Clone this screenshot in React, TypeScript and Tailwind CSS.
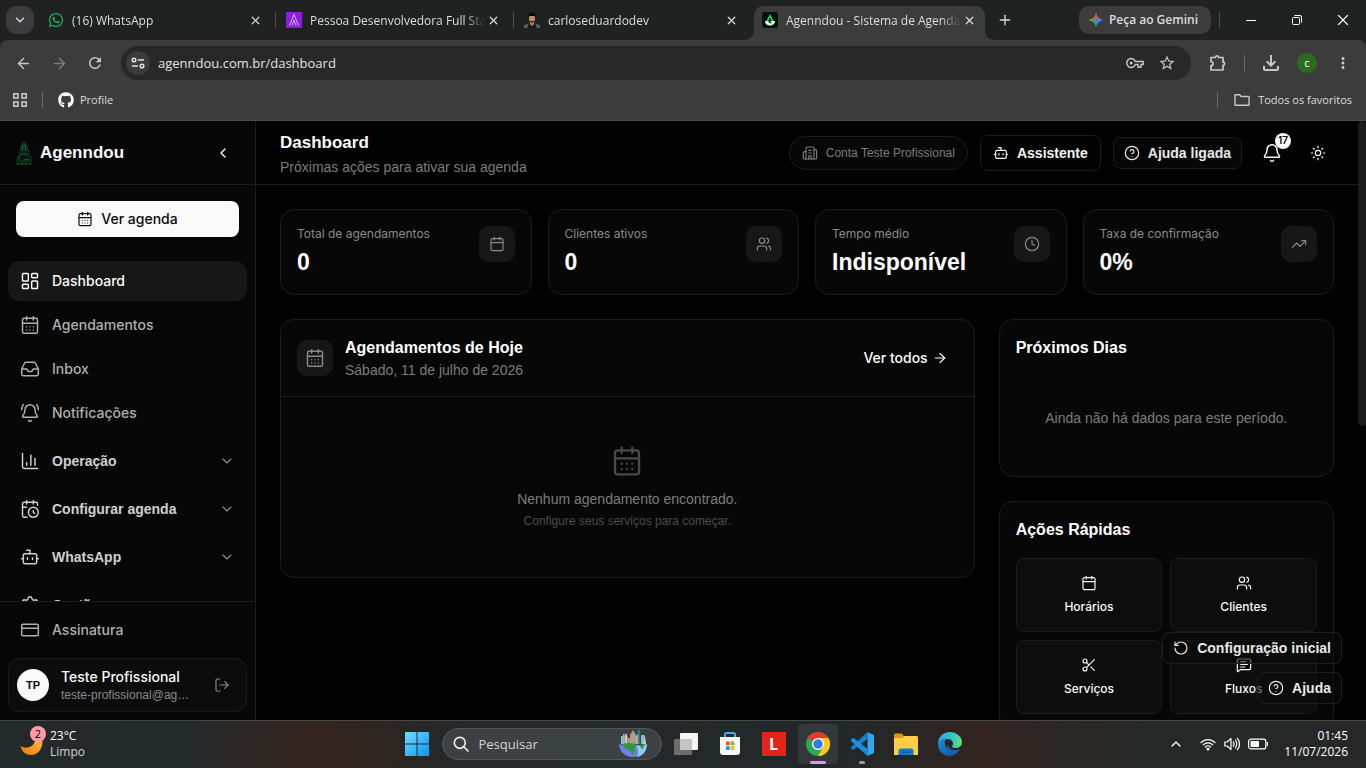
import type { ReactNode } from "react";
import {
  ArrowLeft,
  ArrowRight,
  Bell,
  BellRing,
  Bot,
  Building2,
  Calendar,
  CalendarClock,
  CalendarDays,
  ChartColumn,
  ChevronDown,
  ChevronLeft,
  ChevronUp,
  CircleHelp,
  Clock,
  CreditCard,
  Inbox,
  LayoutDashboard,
  LogOut,
  MessageSquareText,
  Plus,
  RotateCcw,
  Scissors,
  Settings,
  Sun,
  TrendingUp,
  Users,
  X,
  type LucideIcon,
} from "lucide-react";
import { FaGithub, FaWhatsapp } from "react-icons/fa";
import {
  MdMoreVert,
  MdOutlineFileDownload,
  MdRefresh,
  MdStarBorder,
} from "react-icons/md";

/* ---------- Browser ---------- */

function PurpleFavicon() {
  return (
    <svg viewBox="0 0 16 16" className="size-4 shrink-0">
      <rect width="16" height="16" fill="#8a1fe0" />
      <path d="M3.500 13.500 8 2.500 12.500 13.500" fill="none" stroke="#d9b0ff" strokeWidth="1" />
      <path d="M6 13.500 8 8 10 13.500" fill="none" stroke="#e8ccff" strokeWidth="0.800" />
    </svg>
  );
}

function PortraitFavicon() {
  return (
    <svg viewBox="0 0 16 16" className="size-4 shrink-0">
      <path d="M0 16v-2.500c1-1 3-1.500 5-2h6c2 .5 4 1 5 2V16z" fill="#5d5f62" />
      <path d="M3.500 16l1-4.500h7l1 4.500z" fill="#1c1a1a" />
      <path d="M6 9h4v3.500l-2 1.500-2-1.500z" fill="#a9745a" />
      <ellipse cx="8" cy="6.500" rx="3" ry="4.300" fill="#c08a6c" />
      <path d="M4.600 6C4 1.500 6 .3 8 .3s4.200 1 3.400 5.700L10.800 4H5.300z" fill="#0d0b0b" />
      <path d="M5.300 8.200c.4 3 5 3 5.400 0l-1 .8H6.300z" fill="#33211b" />
    </svg>
  );
}

function AgenndouFavicon() {
  return (
    <svg viewBox="0 0 16 16" className="size-4 shrink-0">
      <rect width="16" height="16" rx="3" fill="#04140c" />
      <path d="M8 2 4.300 9h2L8 5.500l1.700 3.500h2z" fill="#1fd15f" />
      <path d="M3 9c0 6 10 6 10 0H8.500v1.600h1.700c-.8 1.200-3.600 1-3.800-1.600z" fill="#dfffe9" />
    </svg>
  );
}

function GeminiStar() {
  return (
    <svg viewBox="0 0 16 16" className="size-4 shrink-0">
      <defs>
        <linearGradient id="gm" x1="0" y1="0.500" x2="1" y2="0.500">
          <stop offset="0" stopColor="#fbbc04" />
          <stop offset="0.350" stopColor="#34a853" />
          <stop offset="0.550" stopColor="#4285f4" />
          <stop offset="1" stopColor="#4c8df6" />
        </linearGradient>
        <linearGradient id="gmTop" x1="0" y1="0" x2="0" y2="1">
          <stop offset="0" stopColor="#ea4335" />
          <stop offset="0.250" stopColor="#ea4335" />
          <stop offset="0.500" stopColor="#ea4335" stopOpacity="0" />
        </linearGradient>
      </defs>
      <path d="M8 0.500C9 5 11 7 15.500 8 11 9 9 11 8 15.500 7 11 5 9 .5 8 5 7 7 5 8 .5z" fill="url(#gm)" />
      <path d="M8 0.500C9 5 11 7 15.500 8 11 9 9 11 8 15.500 7 11 5 9 .5 8 5 7 7 5 8 .5z" fill="url(#gmTop)" />
    </svg>
  );
}

type TabProps = { icon: ReactNode; title: string; active?: boolean; separator?: boolean };

function BrowserTab({ icon, title, active, separator }: TabProps) {
  return (
    <div className="relative flex h-10 w-[238px] shrink-0 items-center">
      {active && (
        <svg viewBox="0 0 251 34" className="absolute -left-2 bottom-0 h-[34px] w-[251px]">
          <path d="M0 34c6 0 10-4 10-10V10C10 4 14 0 20 0h211c6 0 10 4 10 10v14c0 6 4 10 10 10z" fill="#3c3c3c" />
        </svg>
      )}
      <button
        type="button"
        className="relative flex h-7 min-w-0 flex-1 items-center gap-2 pl-[10px] text-left text-[12px] text-[#dddddd]"
      >
        {icon}
        <span className="flex-1 overflow-hidden whitespace-nowrap pt-px [mask-image:linear-gradient(90deg,#000_88%,transparent)]">
          {title}
        </span>
      </button>
      <button type="button" aria-label="Fechar guia" className="relative mr-3 flex size-4 items-center justify-center text-[#dddddd]">
        <X size={13} strokeWidth={2.200} />
      </button>
      <span className={separator ? "h-4 w-px bg-[#505252]" : "w-px"} />
    </div>
  );
}

function Browser() {
  return (
    <header className="shrink-0 bg-[#202221] font-['Open_Sans','Noto_Sans',sans-serif] text-[#dddddd]">
      <div className="flex h-10 items-center">
        <button type="button" aria-label="Pesquisar guias" className="ml-[6px] mr-1 flex size-7 items-center justify-center rounded-[10px] bg-[#3c3c3c]">
          <ChevronDown size={14} strokeWidth={2.500} className="text-[#c7d7f5]" />
        </button>
        <BrowserTab icon={<FaWhatsapp className="size-4 shrink-0 text-[#25b462]" />} title="(16) WhatsApp" separator />
        <BrowserTab icon={<PurpleFavicon />} title="Pessoa Desenvolvedora Full Stack" separator />
        <BrowserTab icon={<PortraitFavicon />} title="carloseduardodev" />
        <BrowserTab icon={<AgenndouFavicon />} title="Agenndou - Sistema de Agendamentos" active />
        <button type="button" aria-label="Nova guia" className="ml-px flex size-7 items-center justify-center">
          <Plus size={16} />
        </button>
        <button type="button" className="ml-auto flex h-7 items-center gap-[5px] whitespace-nowrap rounded-[10px] bg-[#3c3c3c] pl-[9px] pr-[13px] text-[12px] font-semibold">
          <GeminiStar />
          Peça ao Gemini
        </button>
        <span className="mx-2 h-4 w-px bg-[#505252]" />
        <button type="button" aria-label="Minimizar" className="flex h-10 w-[46px] items-center justify-center">
          <span className="h-px w-[10px] bg-white" />
        </button>
        <button type="button" aria-label="Restaurar" className="flex h-10 w-[46px] items-center justify-center">
          <svg viewBox="0 0 10 10" className="size-[10px]" fill="none" stroke="#fff">
            <rect x="0.500" y="2.500" width="7" height="7" rx="1" />
            <path d="M2.500 .5H8A1.500 1.500 0 0 1 9.500 2v5.500" />
          </svg>
        </button>
        <button type="button" aria-label="Fechar" className="flex h-10 w-[46px] items-center justify-center text-white">
          <X size={18} strokeWidth={1.500} />
        </button>
      </div>

      <div className="rounded-t-lg border-b border-[#4a4a4a] bg-[#3c3c3c]">
        <div className="flex h-10 items-end">
          <div className="flex h-[34px] w-[121px] items-center gap-4 pl-[13px]">
            <button type="button" aria-label="Voltar" className="flex size-5 items-center justify-center text-[#c7c7c7]"><ArrowLeft size={17} /></button>
            <button type="button" aria-label="Avançar" className="flex size-5 items-center justify-center text-[#7d7d7d]"><ArrowRight size={17} /></button>
            <button type="button" aria-label="Recarregar" className="flex size-5 items-center justify-center text-[#c7c7c7]"><MdRefresh size={18} /></button>
          </div>
          <div className="flex h-[34px] flex-1 items-center rounded-full bg-[#282828] pl-[5px] pr-[15px]">
            <button type="button" aria-label="Informações do site" className="flex size-6 items-center justify-center rounded-full bg-[#3c3c3c]">
              <svg viewBox="0 0 14 14" className="size-[14px]" fill="none" stroke="#e3e3e3" strokeWidth="1.500">
                <circle cx="3" cy="4" r="1.800" />
                <path d="M7 4h6M1 10h6" />
                <circle cx="11" cy="10" r="1.800" />
              </svg>
            </button>
            <input
              aria-label="Barra de endereço"
              defaultValue="agenndou.com.br/dashboard"
              className="ml-2 min-w-0 flex-1 bg-transparent pt-px text-[13px] text-[#e3e3e3] outline-none"
            />
            <button type="button" aria-label="Senhas" className="mr-[14px] text-[#c7c7c7]">
              <svg viewBox="0 0 18 12" className="h-3 w-[18px]" fill="none" stroke="currentColor" strokeWidth="1.500">
                <path d="M9.300 4.500A4.400 4.400 0 1 0 9.300 7.500H12v2.700h3V7.500h2.200v-3z" strokeLinejoin="round" />
                <circle cx="5.200" cy="6" r="1.500" fill="currentColor" stroke="none" />
              </svg>
            </button>
            <button type="button" aria-label="Favoritar" className="text-[#c7c7c7]"><MdStarBorder size={18} /></button>
          </div>
          <div className="flex h-[34px] w-[175px] items-center pl-[17px] text-[#c7c7c7]">
            <button type="button" aria-label="Extensões" className="flex size-5 items-center justify-center">
              <svg viewBox="0 0 18 18" className="size-[18px]" fill="none" stroke="currentColor" strokeWidth="1.700">
                <path d="M2 3.500h4.300a1.600 1.600 0 0 1 3.200 0H14v4.600a1.600 1.600 0 0 1 0 3.200V16H2v-4.300a2 2 0 0 0 0-4z" strokeLinejoin="round" />
              </svg>
            </button>
            <span className="ml-4 h-4 w-px bg-[#6a6a6a]" />
            <button type="button" aria-label="Downloads" className="ml-4 flex size-5 items-center justify-center"><MdOutlineFileDownload size={24} className="shrink-0" /></button>
            <button type="button" aria-label="Perfil" className="ml-4 flex size-5 items-center justify-center rounded-full bg-[#2f6b1f] text-[11px] text-white">c</button>
            <button type="button" aria-label="Menu" className="ml-4 flex size-5 items-center justify-center"><MdMoreVert size={18} /></button>
          </div>
        </div>
        <div className="flex h-10 items-center text-[11px]">
          <button type="button" aria-label="Grupos de guias" className="ml-3 flex size-4 items-center justify-center">
            <svg viewBox="0 0 14 14" className="size-[14px]" fill="none" stroke="#c7c7c7" strokeWidth="1.600">
              <rect x="0.800" y="0.800" width="4.200" height="4.200" />
              <rect x="9" y="0.800" width="4.200" height="4.200" />
              <rect x="0.800" y="9" width="4.200" height="4.200" />
              <rect x="9" y="9" width="4.200" height="4.200" />
            </svg>
          </button>
          <span className="ml-[14px] h-4 w-px bg-[#6a6a6a]" />
          <a href="#profile" className="ml-[15px] flex items-center gap-[6px]">
            <FaGithub size={16} className="text-white" />
            Profile
          </a>
          <span className="ml-auto h-4 w-px bg-[#6a6a6a]" />
          <button type="button" className="ml-4 mr-[14px] flex items-center gap-2 whitespace-nowrap">
            <svg viewBox="0 0 16 14" className="h-[14px] w-4" fill="none" stroke="#c7c7c7" strokeWidth="1.400" strokeLinejoin="round">
              <path d="M1 12.300V1.700h4.600l1.600 1.800H15v8.800z" />
            </svg>
            Todos os favoritos
          </button>
        </div>
      </div>
    </header>
  );
}

/* ---------- Sidebar ---------- */

function AgenndouLogo() {
  return (
    <svg viewBox="0 0 16 24" className="h-6 w-4" fill="none" stroke="#123d23" strokeWidth="1">
      <path d="M4 10C5 5 6 1 8 .8 10 1 11 5 12.500 10" fill="#0a2013" />
      <path d="M6.500 9V5.500a1.500 1.500 0 0 1 3 0V9" stroke="#1f7a41" />
      <path d="M3 12c3-3.500 8-3.500 11 0M1 17c1-6 13-7 14-1v7H1z" fill="#08170e" />
      <path d="M12 14.500c-4-3-9-1-9 2.500s7 5 10 1.500H8" stroke="#175530" />
      <path d="M1 23h14" stroke="#0f6a32" strokeDasharray="2 2" />
    </svg>
  );
}

const links: { icon: LucideIcon; label: string }[] = [
  { icon: LayoutDashboard, label: "Dashboard" },
  { icon: CalendarDays, label: "Agendamentos" },
  { icon: Inbox, label: "Inbox" },
  { icon: BellRing, label: "Notificações" },
];

const groups: { icon: LucideIcon; label: string }[] = [
  { icon: ChartColumn, label: "Operação" },
  { icon: CalendarClock, label: "Configurar agenda" },
  { icon: Bot, label: "WhatsApp" },
  { icon: Settings, label: "Gestão" },
];

function Sidebar() {
  return (
    <aside className="flex w-64 shrink-0 flex-col border-r border-[#1c1c1c] bg-[#070707]">
      <div className="flex h-16 shrink-0 items-center border-b border-[#1c1c1c] px-4">
        <AgenndouLogo />
        <span className="ml-2 text-[17px] font-semibold text-[#fafafa]">Agenndou</span>
        <button type="button" aria-label="Recolher menu" className="ml-auto flex size-8 items-center justify-center text-[#fafafa]">
          <ChevronLeft size={16} />
        </button>
      </div>
      <div className="flex min-h-0 flex-1 flex-col overflow-hidden">
        <div className="p-4">
          <button type="button" className="flex h-9 w-full items-center justify-center gap-2 rounded-lg bg-[#fafafa] font-[Inter,sans-serif] text-sm font-medium text-[#0a0a0a]">
            <CalendarDays size={16} strokeWidth={1.750} />
            Ver agenda
          </button>
        </div>
        <nav className="flex flex-col gap-1 p-2">
          {links.map(({ icon: Icon, label }, i) => (
            <a
              key={label}
              href={"#" + label.toLowerCase()}
              className={
                "flex h-10 shrink-0 items-center gap-3 rounded-xl px-3 font-[Inter,sans-serif] text-sm font-medium " +
                (i === 0 ? "bg-[#171717] text-[#fafafa]" : "text-[#b0b0b0]")
              }
            >
              <Icon size={20} strokeWidth={1.750} />
              {label}
            </a>
          ))}
          <div className="flex flex-col gap-2 pt-1">
            {groups.map(({ icon: Icon, label }) => (
              <button
                key={label}
                type="button"
                className="flex h-10 shrink-0 items-center gap-3 rounded-xl px-3 text-left text-sm font-semibold text-[#d0d0d0]"
              >
                <Icon size={20} strokeWidth={1.750} />
                <span className="flex-1">{label}</span>
                <ChevronDown size={16} strokeWidth={1.750} className="text-[#8a8a8a]" />
              </button>
            ))}
          </div>
        </nav>
      </div>
      <div className="flex shrink-0 flex-col gap-2 border-t border-[#1c1c1c] p-2">
        <a href="#assinatura" className="flex h-10 items-center gap-3 px-3 font-[Inter,sans-serif] text-sm font-medium text-[#b0b0b0]">
          <CreditCard size={20} strokeWidth={1.750} />
          Assinatura
        </a>
        <div className="flex items-center gap-3 rounded-xl border border-[#1c1c1c] bg-[#0c0c0c] p-2">
          <span className="flex size-8 shrink-0 items-center justify-center rounded-full bg-[#fafafa] text-[11px] font-semibold text-[#0a0a0a]">TP</span>
          <div className="min-w-0 flex-1">
            <div className="truncate font-[Inter,sans-serif] text-sm leading-5 font-medium text-[#fafafa]">Teste Profissional</div>
            <div className="truncate text-xs text-[#8a8a8a]">teste-profissional@agenndou.com.br</div>
          </div>
          <button type="button" aria-label="Sair" className="flex size-8 shrink-0 items-center justify-center text-[#8a8a8a]">
            <LogOut size={16} strokeWidth={1.750} />
          </button>
        </div>
      </div>
    </aside>
  );
}

/* ---------- Dashboard ---------- */

const stats: { label: string; value: string; icon: LucideIcon }[] = [
  { label: "Total de agendamentos", value: "0", icon: Calendar },
  { label: "Clientes ativos", value: "0", icon: Users },
  { label: "Tempo médio", value: "Indisponível", icon: Clock },
  { label: "Taxa de confirmação", value: "0%", icon: TrendingUp },
];

const actions: { label: string; icon: LucideIcon }[] = [
  { label: "Horários", icon: Calendar },
  { label: "Clientes", icon: Users },
  { label: "Serviços", icon: Scissors },
  { label: "Fluxos", icon: MessageSquareText },
];

const card = "rounded-[14px] border border-[#1c1c1c] bg-[#070707]";

function TopBar() {
  return (
    <div className="flex h-16 shrink-0 items-center gap-3 border-b border-[#1c1c1c] px-6">
      <div className="mr-auto pt-1">
        <h1 className="text-[17px] leading-6 font-semibold text-[#fafafa]">Dashboard</h1>
        <p className="text-sm leading-6 text-[#7c7c7c]">Próximas ações para ativar sua agenda</p>
      </div>
      <div className="flex h-[34px] items-center gap-2 whitespace-nowrap rounded-full border border-[#1c1c1c] bg-[#070707] px-3 text-xs text-[#7c7c7c]">
        <Building2 size={16} strokeWidth={1.750} />
        Conta Teste Profissional
      </div>
      <button type="button" className="flex h-9 items-center gap-2 rounded-lg border border-[#1c1c1c] px-3 text-sm font-semibold text-[#f5f5f5]">
        <Bot size={16} strokeWidth={1.750} />
        Assistente
      </button>
      <button type="button" className="flex h-8 items-center gap-2 whitespace-nowrap rounded-lg border border-[#1c1c1c] bg-[#070707] px-[10px] text-sm font-semibold text-[#e8e8e8]">
        <CircleHelp size={16} strokeWidth={1.750} />
        Ajuda ligada
      </button>
      <button type="button" aria-label="Notificações" className="relative flex size-9 items-center justify-center text-[#fafafa]">
        <Bell size={20} strokeWidth={1.750} />
        <span className="absolute -right-px -top-[2px] flex size-4 items-center justify-center rounded-full bg-[#fafafa] font-[Inter,sans-serif] text-[10px] font-semibold text-[#0a0a0a]">17</span>
      </button>
      <button type="button" aria-label="Tema" className="flex size-8 items-center justify-center text-[#fafafa]">
        <Sun size={16} strokeWidth={1.750} />
      </button>
    </div>
  );
}

function Dashboard() {
  return (
    <main className="flex min-w-0 flex-1 flex-col">
      <TopBar />
      <div className="flex min-h-0 flex-1 flex-col gap-6 overflow-hidden p-6">
        <div className="grid shrink-0 grid-cols-4 gap-4">
          {stats.map(({ label, value, icon: Icon }) => (
            <section key={label} className={card + " flex h-[86px] items-start justify-between p-4"}>
              <div>
                <div className="font-[Inter,sans-serif] text-xs text-[#8a8a8a]">{label}</div>
                <div className="mt-1 text-[23px] leading-8 font-semibold text-white">{value}</div>
              </div>
              <span className="flex size-9 shrink-0 items-center justify-center rounded-[10px] bg-[#171717] text-[#8a8a8a]">
                <Icon size={16} strokeWidth={1.750} />
              </span>
            </section>
          ))}
        </div>

        <div className="grid grid-cols-3 items-start gap-6">
          <section className={card + " col-span-2"}>
            <div className="flex h-[77px] items-center gap-3 border-b border-[#1c1c1c] px-4">
              <span className="flex size-9 items-center justify-center rounded-[10px] bg-[#171717] text-[#8a8a8a]">
                <CalendarDays size={20} strokeWidth={1.750} />
              </span>
              <div>
                <h2 className="text-base leading-6 font-semibold text-white">Agendamentos de Hoje</h2>
                <p className="text-sm text-[#7c7c7c]">Sábado, 11 de julho de 2026</p>
              </div>
              <button type="button" className="ml-auto flex h-8 items-center gap-1 px-[10px] font-[Inter,sans-serif] text-sm font-medium text-white">
                Ver todos
                <ArrowRight size={16} strokeWidth={1.750} />
              </button>
            </div>
            <div className="flex flex-col items-center py-12">
              <CalendarDays size={32} strokeWidth={1.750} className="text-[#4a4a4a]" />
              <p className="mt-3 text-sm text-[#7c7c7c]">Nenhum agendamento encontrado.</p>
              <p className="mt-1 text-xs text-[#4c4c4c]">Configure seus serviços para começar.</p>
            </div>
          </section>

          <div className="flex flex-col gap-6">
            <section className={card + " p-4"}>
              <h2 className="text-base leading-6 font-semibold text-white">Próximos Dias</h2>
              <p className="mt-4 py-8 text-center text-sm text-[#7c7c7c]">Ainda não há dados para este período.</p>
            </section>
            <section className={card + " p-4"}>
              <h2 className="text-base leading-6 font-semibold text-white">Ações Rápidas</h2>
              <div className="mt-4 grid grid-cols-2 gap-2">
                {actions.map(({ label, icon: Icon }) => (
                  <button
                    key={label}
                    type="button"
                    className="flex flex-col items-center gap-2 rounded-lg border border-[#1c1c1c] bg-[#0d0d0d] py-4 font-[Inter,sans-serif] text-xs font-medium text-[#fafafa]"
                  >
                    <Icon size={16} strokeWidth={1.750} />
                    {label}
                  </button>
                ))}
              </div>
            </section>
          </div>
        </div>
      </div>
    </main>
  );
}

function FloatingHelp() {
  const pill =
    "flex h-8 items-center gap-2 rounded-lg border border-[#1f1f1f] bg-[#0c0c0c]/60 px-[10px] text-sm font-semibold text-[#e8e8e8]";
  return (
    <div className="absolute bottom-4 right-6 flex flex-col items-end gap-2">
      <button type="button" className={pill}>
        <RotateCcw size={16} strokeWidth={1.750} />
        Configuração inicial
      </button>
      <button type="button" className={pill}>
        <CircleHelp size={16} strokeWidth={1.750} />
        Ajuda
      </button>
    </div>
  );
}

/* ---------- Taskbar ---------- */

function WindowsLogo() {
  return (
    <svg viewBox="0 0 24 24" className="size-6">
      <defs>
        <linearGradient id="win" x1="0" y1="0" x2="1" y2="1">
          <stop offset="0" stopColor="#6fdcff" />
          <stop offset="1" stopColor="#0a96f5" />
        </linearGradient>
      </defs>
      <path d="M0 0h11.500v11.500H0zM12.500 0H24v11.500H12.500zM0 12.500h11.500V24H0zM12.500 12.500H24V24H12.500z" fill="url(#win)" />
    </svg>
  );
}

function GlobeArt() {
  return (
    <svg viewBox="0 0 28 28" className="size-7 shrink-0">
      <path d="M2 14V6h2v-2h1.500v10zM22 14V5h3v9z" fill="#8fb8cf" />
      <path d="M5.500 14V6.500L7 3l1.500 3.500V14z" fill="#d6c3ad" />
      <path d="M8.800 14V8h2v6zM11 14V5l3-5 3 5v9z" fill="#b39c8a" />
      <path d="M17 14V6l1.500-2 1.500 2v8z" fill="#c9ac93" />
      <path d="M18.800 14V0h1.800v14z" fill="#159aa8" />
      <path d="M24.500 14l1-10 1.500 10z" fill="#e0d4c8" />
      <path d="M0 14c0 7 6 13 14 13s14-6 14-13c-4 2-24 2-28 0z" fill="#6f7ff0" />
      <path d="M17 15c4 1 8 0 11-1 0 7-4 12-10 13 2-5 1-8-1-12z" fill="#8ec9f4" />
      <path d="M3 14c5-1.500 10-1 14 0 1.500 2-.5 3.500-2 4l1.500 3-2.500 4c-2-1-1.500-4-4-5-3 0-5-3-7-6zM20 15l5.500-1-2 5.500z" fill="#2f9a35" />
    </svg>
  );
}

function TaskViewIcon() {
  return (
    <svg viewBox="0 0 24 24" className="size-6">
      <rect x="6" y="1" width="18" height="17" rx="1" fill="#f4f4f4" />
      <rect x="0" y="7" width="18" height="16" rx="1" fill="#6c6c6c" />
      <path d="M6 7h12v11H6z" fill="#c4c4c4" />
    </svg>
  );
}

function StoreIcon() {
  return (
    <svg viewBox="0 0 24 24" className="size-6">
      <path d="M7 7V2.500A1.500 1.500 0 0 1 8.500 1h7A1.500 1.500 0 0 1 17 2.500V7" fill="none" stroke="#35b5f1" strokeWidth="2" />
      <path d="M2 5h20v15a3 3 0 0 1-3 3H5a3 3 0 0 1-3-3z" fill="#f6f6f6" />
      <path d="M8 9.500h3.700v3.700H8z" fill="#e8502a" />
      <path d="M12.600 9.500h3.700v3.700h-3.700z" fill="#7fb928" />
      <path d="M8 14.200h3.700v3.700H8z" fill="#10a0e8" />
      <path d="M12.600 14.200h3.700v3.700h-3.700z" fill="#fbb817" />
    </svg>
  );
}

function ChromeIcon() {
  return (
    <svg viewBox="0 0 24 24" className="size-6">
      <circle cx="12" cy="12" r="12" fill="#2da94f" />
      <path d="M12 12 1.600 6A12 12 0 0 1 22.400 6z" fill="#e33b2e" />
      <path d="M12 12V6h10.400A12 12 0 0 1 12 24l5.200-9z" fill="#fdc916" />
      <path d="M1.600 6 6.800 15 12 12z" fill="#2da94f" />
      <path d="M1.600 6a12 12 0 0 1 5.400-4.900L12 6 6.800 9z" fill="#e33b2e" />
      <circle cx="12" cy="12" r="6" fill="#fff" />
      <circle cx="12" cy="12" r="4.700" fill="#2f7de9" />
    </svg>
  );
}

function CodeIcon() {
  return (
    <svg viewBox="0 0 24 24" className="size-6">
      <path d="M17.500 0 24 3v18l-6.500 3z" fill="#2fa8ee" />
      <path d="M17.500 0v7L3.500 18 1 16.500v-1.300z" fill="#1181cc" />
      <path d="M17.500 24v-7L3.500 6 1 7.500v1.300z" fill="#0f6fb3" />
      <path d="M1 8.800 17.500 24v-7L3.500 6 1 7.500z" fill="#1b8fd8" />
    </svg>
  );
}

function FolderIcon() {
  return (
    <svg viewBox="0 0 24 24" className="size-6">
      <path d="M0 3a1.500 1.500 0 0 1 1.500-1.500H8L10 4h6v5H0z" fill="#d9980f" />
      <path d="M0 6h8l2-2h12.500A1.500 1.500 0 0 1 24 5.500V23H0z" fill="#fdce45" />
      <path d="M4.500 23v-4.500a2 2 0 0 1 2-2h11a2 2 0 0 1 2 2V23z" fill="#1779cf" />
      <path d="M8 19.500h8V21H8z" fill="#0c5596" />
    </svg>
  );
}

function EdgeIcon() {
  return (
    <svg viewBox="0 0 24 24" className="size-6">
      <defs>
        <linearGradient id="edgeTop" x1="0" y1="0.500" x2="1" y2="0.500">
          <stop offset="0" stopColor="#2aa9e8" />
          <stop offset="0.600" stopColor="#35c7c3" />
          <stop offset="1" stopColor="#68e06a" />
        </linearGradient>
        <linearGradient id="edgeLow" x1="0" y1="0" x2="1" y2="1">
          <stop offset="0" stopColor="#1b8fd6" />
          <stop offset="1" stopColor="#0c4fa0" />
        </linearGradient>
      </defs>
      <path d="M0 12C0 4 6 0 12 0s12 4.500 12 10c0 4-3 6-6.500 6-3 0-4-1.300-3-2.500 2-3-1-6.500-5-6.500-5 0-9 3-9.500 5z" fill="url(#edgeTop)" />
      <path d="M0 12c.5-3 4-5.500 8.500-5.200C5 9 7 18 14 19c3 .4 6-.3 8-2-2 4-6 7-10.500 7C5 24 0 18.500 0 12z" fill="url(#edgeLow)" />
      <path d="M9.500 12c-1.500 4 1 9 5.500 9.500 2.500 0 5-1.500 7-4.500-5 2.500-12 .5-12.500-5z" fill="#1461b5" />
    </svg>
  );
}

function TaskButton({ label, children, className = "" }: { label: string; children: ReactNode; className?: string }) {
  return (
    <button type="button" aria-label={label} className={"relative flex size-10 shrink-0 items-center justify-center rounded " + className}>
      {children}
    </button>
  );
}

function Taskbar() {
  return (
    <footer className="grid h-12 shrink-0 grid-cols-[1fr_auto_1fr] items-center bg-[linear-gradient(90deg,#232a2b_0%,#24292a_14%,#33231c_23%,#2e241f_27%,#24282a_34%,#222829_62%,#33231f_72%,#2a2625_78%,#252827_84%,#252827_100%)] font-['Open_Sans','Noto_Sans',sans-serif] text-[12px] leading-4 text-white shadow-[inset_0_1px_0_#474949]">
      <div className="flex items-center pl-[18px]">
        <div className="relative h-10 w-8">
          <svg viewBox="0 0 24 24" className="absolute left-px top-[10px] size-6">
            <defs>
              <linearGradient id="moon" x1="1" y1="0" x2="0" y2="1">
                <stop offset="0" stopColor="#f8c13a" />
                <stop offset="1" stopColor="#ee7a12" />
              </linearGradient>
            </defs>
            <path d="M16 0c2 6-1 13-8 13.500-3 .2-5-.5-6.500-1.500C3 18 7 21 12 21c8 0 13-9 11-16z" fill="url(#moon)" />
          </svg>
          <span className="absolute left-3 top-[2px] flex size-4 items-center justify-center rounded-full bg-[#ff99a4] text-[11px] text-black">2</span>
        </div>
        <div>
          <div>23°C</div>
          <div className="text-[#cfd2d2]">Limpo</div>
        </div>
      </div>

      <div className="flex items-center gap-1">
        <TaskButton label="Iniciar"><WindowsLogo /></TaskButton>
        <label className="ml-px flex h-8 w-[220px] items-center gap-[10px] rounded-full border border-[#55585a] bg-[#3c4144] pl-[10px] pr-[14px]">
          <svg viewBox="0 0 16 16" className="size-4 shrink-0" fill="none" stroke="#e8e8e8" strokeWidth="1.700" strokeLinecap="round">
            <circle cx="6.800" cy="6.800" r="5.500" />
            <path d="m11 11 4 4" />
          </svg>
          <input type="text" aria-label="Pesquisar" placeholder="Pesquisar" className="min-w-0 flex-1 bg-transparent text-[13px] outline-none placeholder:text-[#d5d5d5]" />
          <GlobeArt />
        </label>
        <TaskButton label="Visão de tarefas"><TaskViewIcon /></TaskButton>
        <TaskButton label="Microsoft Store"><StoreIcon /></TaskButton>
        <TaskButton label="L">
          <span className="flex size-6 items-center justify-center bg-[#e1251b] text-[16px] font-bold">L</span>
        </TaskButton>
        <TaskButton label="Google Chrome" className="bg-[#33383a]">
          <ChromeIcon />
          <span className="absolute bottom-0 left-3 h-[3px] w-4 rounded-full bg-[#d99be6]" />
        </TaskButton>
        <TaskButton label="Visual Studio Code">
          <CodeIcon />
          <span className="absolute bottom-0 left-[17px] h-[3px] w-[6px] rounded-full bg-[#9a9d9e]" />
        </TaskButton>
        <TaskButton label="Explorador de Arquivos"><FolderIcon /></TaskButton>
        <TaskButton label="Microsoft Edge"><EdgeIcon /></TaskButton>
      </div>

      <div className="flex items-center justify-end pr-[18px]">
        <button type="button" aria-label="Mostrar ícones ocultos" className="mr-4"><ChevronUp size={16} /></button>
        <div className="mr-4 flex items-center gap-2">
          <svg viewBox="0 0 16 14" className="h-[14px] w-4" fill="none" stroke="#fff" strokeWidth="1.200" strokeLinecap="round">
            <path d="M1 5.500a10 10 0 0 1 14 0M3.200 7.800a6.800 6.800 0 0 1 9.600 0M5.400 10a3.700 3.700 0 0 1 5.200 0" />
            <circle cx="8" cy="12" r="1" fill="#fff" />
          </svg>
          <svg viewBox="0 0 16 14" className="h-[14px] w-4" fill="none" stroke="#fff" strokeWidth="1.200" strokeLinecap="round" strokeLinejoin="round">
            <path d="M.8 5v4h2.400L7 12.500v-11L3.200 5zM9.200 5a3 3 0 0 1 0 4M11.300 3.200a5.500 5.500 0 0 1 0 7.600M13.300 1.300a8.300 8.300 0 0 1 0 11.400" />
          </svg>
          <svg viewBox="0 0 20 12" className="h-3 w-5">
            <rect x="0.600" y="1.100" width="17.300" height="9.800" rx="2.500" fill="none" stroke="#fff" strokeWidth="1.200" />
            <rect x="2.500" y="3" width="8.500" height="6" rx="0.800" fill="#fff" />
            <path d="M19.300 4.500v3" stroke="#fff" strokeWidth="1.200" strokeLinecap="round" />
          </svg>
        </div>
        <div className="text-right text-[12px]">
          <div>01:45</div>
          <div>11/07/2026</div>
        </div>
      </div>
    </footer>
  );
}

export default function App() {
  return (
    <div className="flex h-screen flex-col overflow-hidden bg-black">
      <Browser />
      <div className="relative flex min-h-0 flex-1 bg-[#020202] font-['Liberation_Sans',Arial,sans-serif]">
        <Sidebar />
        <Dashboard />
        <div className="w-2 shrink-0">
          <div className="h-[51%] rounded-full bg-[#1b1b1b]" />
        </div>
        <FloatingHelp />
      </div>
      <Taskbar />
    </div>
  );
}
